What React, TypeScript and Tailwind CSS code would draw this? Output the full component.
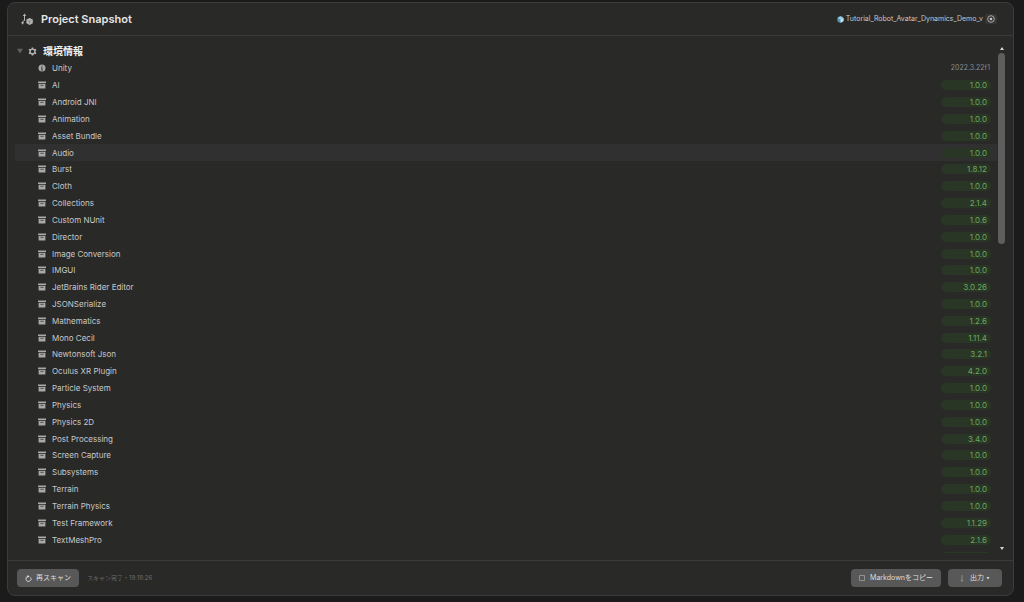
import { useState } from "react";

type Package = {
  name: string;
  version: string;
};

const packages: Package[] = [
  { name: "AI", version: "1.0.0" },
  { name: "Android JNI", version: "1.0.0" },
  { name: "Animation", version: "1.0.0" },
  { name: "Asset Bundle", version: "1.0.0" },
  { name: "Audio", version: "1.0.0" },
  { name: "Burst", version: "1.8.12" },
  { name: "Cloth", version: "1.0.0" },
  { name: "Collections", version: "2.1.4" },
  { name: "Custom NUnit", version: "1.0.6" },
  { name: "Director", version: "1.0.0" },
  { name: "Image Conversion", version: "1.0.0" },
  { name: "IMGUI", version: "1.0.0" },
  { name: "JetBrains Rider Editor", version: "3.0.26" },
  { name: "JSONSerialize", version: "1.0.0" },
  { name: "Mathematics", version: "1.2.6" },
  { name: "Mono Cecil", version: "1.11.4" },
  { name: "Newtonsoft Json", version: "3.2.1" },
  { name: "Oculus XR Plugin", version: "4.2.0" },
  { name: "Particle System", version: "1.0.0" },
  { name: "Physics", version: "1.0.0" },
  { name: "Physics 2D", version: "1.0.0" },
  { name: "Post Processing", version: "3.4.0" },
  { name: "Screen Capture", version: "1.0.0" },
  { name: "Subsystems", version: "1.0.0" },
  { name: "Terrain", version: "1.0.0" },
  { name: "Terrain Physics", version: "1.0.0" },
  { name: "Test Framework", version: "1.1.29" },
  { name: "TextMeshPro", version: "2.1.6" },
];

const HierarchyIcon = () => (
  <svg viewBox="0 0 12 12" className="size-3 text-[#b4b4b4]" fill="none" stroke="currentColor">
    <path d="M3.5 2v5.8M3.5 7.3L1.6 8.6v2" />
    <path d="M1.7 3L3.5.5 5.3 3zM0 9.3h3.2l-1.6 2.4z" fill="currentColor" stroke="none" />
    <path d="M8.6 4.9l3.2 1.7v3.6l-3.2 1.7-3.2-1.7V6.6z" fill="currentColor" stroke="none" />
    <path d="M6.8 7.4l1.8 1 1.8-1M8.6 8.4v2.2" stroke="#666" strokeWidth=".6" />
  </svg>
);

const GearIcon = () => (
  <svg viewBox="0 0 10 10" className="size-[9px] text-[#b4b4b4]" fill="none" stroke="currentColor">
    <circle cx="5" cy="5" r="2.7" strokeWidth="1.5" />
    <path
      d="M5 .5v1.8M5 7.7v1.8M1.1 2.7l1.5.9M7.4 6.4l1.5.9M1.1 7.3l1.5-.9M7.4 3.6l1.5-.9"
      strokeWidth="1.8"
    />
  </svg>
);

const InfoIcon = () => (
  <svg viewBox="0 0 8 8" className="size-2">
    <circle cx="4" cy="4" r="3.5" fill="#a8a8a8" />
    <path d="M4 1.5v1M3.2 3.5H4v2.3M3.1 6h1.8" stroke="#333" strokeWidth=".9" fill="none" />
  </svg>
);

const PackageIcon = () => (
  <svg viewBox="0 0 8 8" className="size-2">
    <path d="M0 .5h8v1.6H0zM.6 2.8h6.8v4.8H.6z" fill="#a9a9a9" />
    <path d="M2.4 4.3h3.2" stroke="#444" strokeWidth=".9" />
  </svg>
);

const PrefabIcon = () => (
  <svg viewBox="0 0 8 8" className="size-[7px]">
    <circle cx="4" cy="4" r="3.7" fill="#4f91b5" />
    <path d="M4 .3l3.2 1.9L4 4 .8 2.2z" fill="#9fcde2" />
    <path d="M4 4l3.4-1.8v3.4L4 7.7z" fill="#d7e2e8" />
  </svg>
);

const RefreshIcon = () => (
  <svg viewBox="0 0 8 8" className="size-[7px]" fill="none" stroke="currentColor">
    <path d="M6.4 2.8A2.9 2.9 0 1 1 3.6 1.6" />
    <path d="M2.7 0l2.6 1.6-2.6 1.6z" fill="currentColor" stroke="none" />
  </svg>
);

const App = () => {
  const [open, setOpen] = useState(true);
  const [status] = useState("スキャン完了・19:18:26");

  return (
    <div className="h-screen bg-[#1a1b1a] pt-[2px] pr-[10px] pb-[6px] pl-[7px] font-['Inter','Noto_Sans_CJK_JP',sans-serif] text-[8px] leading-[10px] text-[#c8c8c8]">
      <main className="flex h-full flex-col overflow-hidden rounded-lg border border-[#3b3c3b] bg-[#292928]">
        <header className="flex shrink-0 items-center border-b border-[#3b3b3a] py-2 pr-4 pl-[13px]">
          <HierarchyIcon />
          <h1 className="ml-2 flex-1 text-[11px] leading-4 font-semibold text-[#e6e6e6]">
            Project Snapshot
          </h1>
          <div className="flex items-center gap-[2px]">
            <PrefabIcon />
            <span className="text-[7px] whitespace-nowrap">
              Tutorial_Robot_Avatar_Dynamics_Demo_v
            </span>
            <button
              aria-label="Select object"
              className="flex h-[10px] w-3 items-center justify-center rounded-xs bg-[#363636]"
            >
              <svg viewBox="0 0 8 8" className="size-2" fill="none" stroke="#c4c4c4">
                <circle cx="4" cy="4" r="3.3" strokeWidth=".8" />
                <circle cx="4" cy="4" r="1.3" fill="#c4c4c4" stroke="none" />
              </svg>
            </button>
          </div>
        </header>

        <section className="flex min-h-0 flex-1 p-[7px]">
          <div className="flex min-w-0 flex-1 flex-col">
            <button
              aria-expanded={open}
              onClick={() => setOpen(!open)}
              className="flex h-4 shrink-0 items-center text-left"
            >
              <svg viewBox="0 0 6 6" className="ml-[2px] size-[6px]">
                <path d="M0 .8h6L3 5.5z" fill="#626262" />
              </svg>
              <span className="ml-[5px]">
                <GearIcon />
              </span>
              <span className="ml-[6px] text-[10px] leading-4 font-bold text-[#f0f0f0]">
                環境情報
              </span>
            </button>

            {open && (
              <ul className="mt-px flex min-h-0 flex-1 flex-col">
                <li className="flex flex-1 items-center gap-[6px] pr-[7px] pl-[23px]">
                  <InfoIcon />
                  <span className="flex-1">Unity</span>
                  <span className="text-[7px] text-[#8c8c8c]">2022.3.22f1</span>
                </li>
                {packages.map((pkg) => (
                  <li
                    key={pkg.name}
                    className={`flex flex-1 items-center gap-[6px] pr-[6px] pl-[23px] ${
                      pkg.name === "Audio" ? "bg-[#303030]" : "hover:bg-[#303030]"
                    }`}
                  >
                    <PackageIcon />
                    <span className="flex-1">{pkg.name}</span>
                    <span className="w-[50px] rounded-full bg-[#293626] pr-1 text-right text-[#6fa75f]">
                      {pkg.version}
                    </span>
                  </li>
                ))}
                <li className="mr-[8px] flex h-[5px] items-end justify-end">
                  <span className="h-px w-[46px] bg-[#293626]" />
                </li>
              </ul>
            )}
          </div>

          <div className="flex w-[9px] shrink-0 flex-col items-center">
            <button aria-label="Scroll up" className="flex h-[10px] items-center">
              <svg viewBox="0 0 4 3" className="h-[3px] w-1">
                <path d="M0 3h4L2 0z" fill="#d8d8d8" />
              </svg>
            </button>
            <div className="flex w-[7px] flex-1 flex-col">
              <div className="h-[39%] rounded-full bg-[#5e5e5e]" />
            </div>
            <button aria-label="Scroll down" className="flex h-[10px] items-center">
              <svg viewBox="0 0 4 3" className="h-[3px] w-1">
                <path d="M0 0h4L2 3z" fill="#d8d8d8" />
              </svg>
            </button>
          </div>
        </section>

        <footer className="flex shrink-0 items-center border-t border-[#3b3b3a] py-2 pr-[11px] pl-[9px] text-[7px]">
          <button className="flex h-[18px] items-center gap-1 rounded bg-[#585858] px-2 text-[#dedede]">
            <RefreshIcon />
            再スキャン
          </button>
          <span className="ml-2 flex-1 text-[6px] text-[#6c6c6c]">{status}</span>
          <button className="flex h-[18px] items-center gap-[5px] rounded bg-[#585858] px-2 text-[#dedede]">
            <svg viewBox="0 0 6 6" className="size-[6px]" fill="none" stroke="#a0a0a0">
              <path d="M.5.5h5v5h-5z" strokeWidth=".8" />
            </svg>
            Markdownをコピー
          </button>
          <button className="ml-[7px] flex h-[18px] items-center rounded bg-[#585858] px-3 text-[#dedede]">
            <svg viewBox="0 0 4 7" className="mr-[6px] h-[7px] w-1" fill="none" stroke="#a0a0a0">
              <path d="M2 0v6.3M1 5l1 1.3L3 5" strokeWidth=".7" />
            </svg>
            出力
            <svg viewBox="0 0 4 4" className="ml-[2px] size-1">
              <path d="M.5 1h3L2 3.4z" fill="#dedede" />
            </svg>
          </button>
        </footer>
      </main>
    </div>
  );
};

export default App;
